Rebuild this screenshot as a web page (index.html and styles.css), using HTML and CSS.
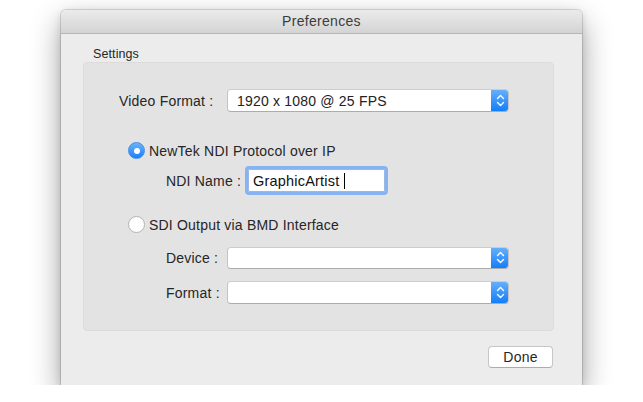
FILE: index.html
```html
<!DOCTYPE html>
<html>
<head>
<meta charset="utf-8">
<title>Preferences</title>
<link rel="stylesheet" href="styles.css">
</head>
<body>
<div class="page">
  <div class="window">
    <div class="titlebar">Preferences</div>
    <div class="content">
      <div class="group-label">Settings</div>
      <div class="group">
        <div class="row row-video">
          <span class="label label-video">Video Format :</span>
          <div class="popup">
            <span class="popup-text">1920 x 1080 @ 25 FPS</span>
            <span class="popup-arrows">
              <svg width="9" height="13" viewBox="0 0 9 13"><path d="M1.5 4.5 L4.5 1.5 L7.5 4.5 M1.5 8.5 L4.5 11.5 L7.5 8.5" fill="none" stroke="#fff" stroke-width="1.4" stroke-linecap="round" stroke-linejoin="round"/></svg>
            </span>
          </div>
        </div>
        <div class="row row-radio1">
          <span class="radio radio-on"><span class="dot"></span></span>
          <span class="radio-text">NewTek NDI Protocol over IP</span>
        </div>
        <div class="row row-ndi">
          <span class="label label-ndi">NDI Name :</span>
          <div class="field"><span class="field-text">GraphicArtist</span><span class="caret"></span></div>
        </div>
        <div class="row row-radio2">
          <span class="radio"></span>
          <span class="radio-text">SDI Output via BMD Interface</span>
        </div>
        <div class="row row-device">
          <span class="label label-sub">Device :</span>
          <div class="popup popup-small">
            <span class="popup-text"></span>
            <span class="popup-arrows">
              <svg width="9" height="13" viewBox="0 0 9 13"><path d="M1.5 4.5 L4.5 1.5 L7.5 4.5 M1.5 8.5 L4.5 11.5 L7.5 8.5" fill="none" stroke="#fff" stroke-width="1.4" stroke-linecap="round" stroke-linejoin="round"/></svg>
            </span>
          </div>
        </div>
        <div class="row row-format">
          <span class="label label-sub">Format :</span>
          <div class="popup">
            <span class="popup-text"></span>
            <span class="popup-arrows">
              <svg width="9" height="13" viewBox="0 0 9 13"><path d="M1.5 4.5 L4.5 1.5 L7.5 4.5 M1.5 8.5 L4.5 11.5 L7.5 8.5" fill="none" stroke="#fff" stroke-width="1.4" stroke-linecap="round" stroke-linejoin="round"/></svg>
            </span>
          </div>
        </div>
      </div>
      <div class="footer">
        <button class="btn">Done</button>
      </div>
    </div>
  </div>
</div>
</body>
</html>
```
FILE: styles.css
```css
html, body {
  margin: 0;
  background: #ffffff;
}
body {
  font-family: "Liberation Sans", Arial, sans-serif;
  font-size: 14px;
  letter-spacing: 0.2px;
  color: #262626;
}
.page {
  padding: 10px 0 0 61px;
}
.window {
  width: 521px;
  height: 375px;
  background: #ececec;
  border-radius: 5px 5px 0 0;
  box-shadow: 0 0 0 1px rgba(0,0,0,0.12), 0 12px 30px rgba(0,0,0,0.38), 0 2px 8px rgba(0,0,0,0.12);
  display: flex;
  flex-direction: column;
  overflow: hidden;
}
.titlebar {
  height: 23px;
  line-height: 23px;
  text-align: center;
  color: #3c3c3c;
  font-size: 14px;
  letter-spacing: 0.3px;
  background: linear-gradient(#ebebeb, #d4d4d4);
  border-bottom: 1px solid #b5b5b5;
  flex: none;
}
.content {
  display: flex;
  flex-direction: column;
  padding: 0 28px 0 22px;
  flex: 1;
}
.group-label {
  font-size: 12.5px;
  letter-spacing: 0.1px;
  color: #262626;
  padding: 12px 0 0 10px;
  height: 16px;
  line-height: 16px;
}
.group {
  margin-top: 0;
  height: 269px;
  background: #e3e3e3;
  border: 1px solid #dcdcdc;
  border-radius: 4px;
  box-sizing: border-box;
  display: flex;
  flex-direction: column;
  padding-top: 26px;
}
.row {
  display: flex;
  align-items: center;
}
.label {
  flex: none;
}
.row-video {
  padding-left: 35px;
  height: 23px;
}
.label-video { width: 108px; }
.row-radio1 {
  margin-top: 30px;
  padding-left: 44px;
  height: 17px;
}
.row-ndi {
  margin-top: 6px;
  padding-left: 82px;
  height: 31px;
}
.label-ndi { width: 79px; }
.row-radio2 {
  margin-top: 20px;
  padding-left: 44px;
  height: 17px;
}
.row-device {
  margin-top: 13px;
  padding-left: 82px;
  height: 23px;
}
.row-format {
  margin-top: 12px;
  padding-left: 82px;
  height: 23px;
}
.label-sub { width: 61px; }
.popup {
  width: 282px;
  height: 23px;
  box-sizing: border-box;
  background: #fff;
  border: 1px solid #c3c3c3;
  border-top-color: #cdcdcd;
  border-bottom-color: #acacac;
  border-radius: 4px;
  display: flex;
  align-items: center;
  overflow: hidden;
}
.popup-small { height: 22px; }
.popup-text {
  flex: 1;
  padding-left: 9px;
  color: #222;
}
.popup-arrows {
  width: 18px;
  align-self: stretch;
  background: linear-gradient(#69b1fa, #0f7cfa);
  display: flex;
  align-items: center;
  justify-content: center;
  margin: -1px -1px -1px 0;
  border-radius: 0 4px 4px 0;
}
.radio {
  width: 17px;
  height: 17px;
  box-sizing: border-box;
  border-radius: 50%;
  background: #fff;
  border: 1px solid #b2b2b2;
  margin-right: 4px;
  display: flex;
  align-items: center;
  justify-content: center;
  flex: none;
}
.radio-on {
  background: linear-gradient(#6cb3fa, #1a80fa);
  border: 1px solid #3f8ef0;
}
.dot {
  width: 6px;
  height: 6px;
  border-radius: 50%;
  background: #fff;
}
.radio-text {
  color: #262626;
}
.field {
  width: 143px;
  height: 29px;
  box-sizing: border-box;
  border: 3px solid #86b4f2;
  border-radius: 4px;
  background: #fff;
  box-shadow: inset 0 0 0 1px #9ab8e4;
  display: flex;
  align-items: center;
  padding-left: 5px;
}
.field-text {
  font-size: 14.5px;
  color: #111;
}
.caret {
  width: 1px;
  height: 16px;
  background: #000;
  margin-left: 5px;
}
.footer {
  display: flex;
  justify-content: flex-end;
  padding-top: 15px;
}
.btn {
  width: 65px;
  height: 22px;
  box-sizing: border-box;
  background: #fff;
  border: 1px solid #c6c6c6;
  border-bottom-color: #acacac;
  border-radius: 4px;
  font-family: "Liberation Sans", Arial, sans-serif;
  font-size: 14px;
  letter-spacing: 0.2px;
  color: #262626;
  padding: 0;
  margin-right: 1px;
}
```
